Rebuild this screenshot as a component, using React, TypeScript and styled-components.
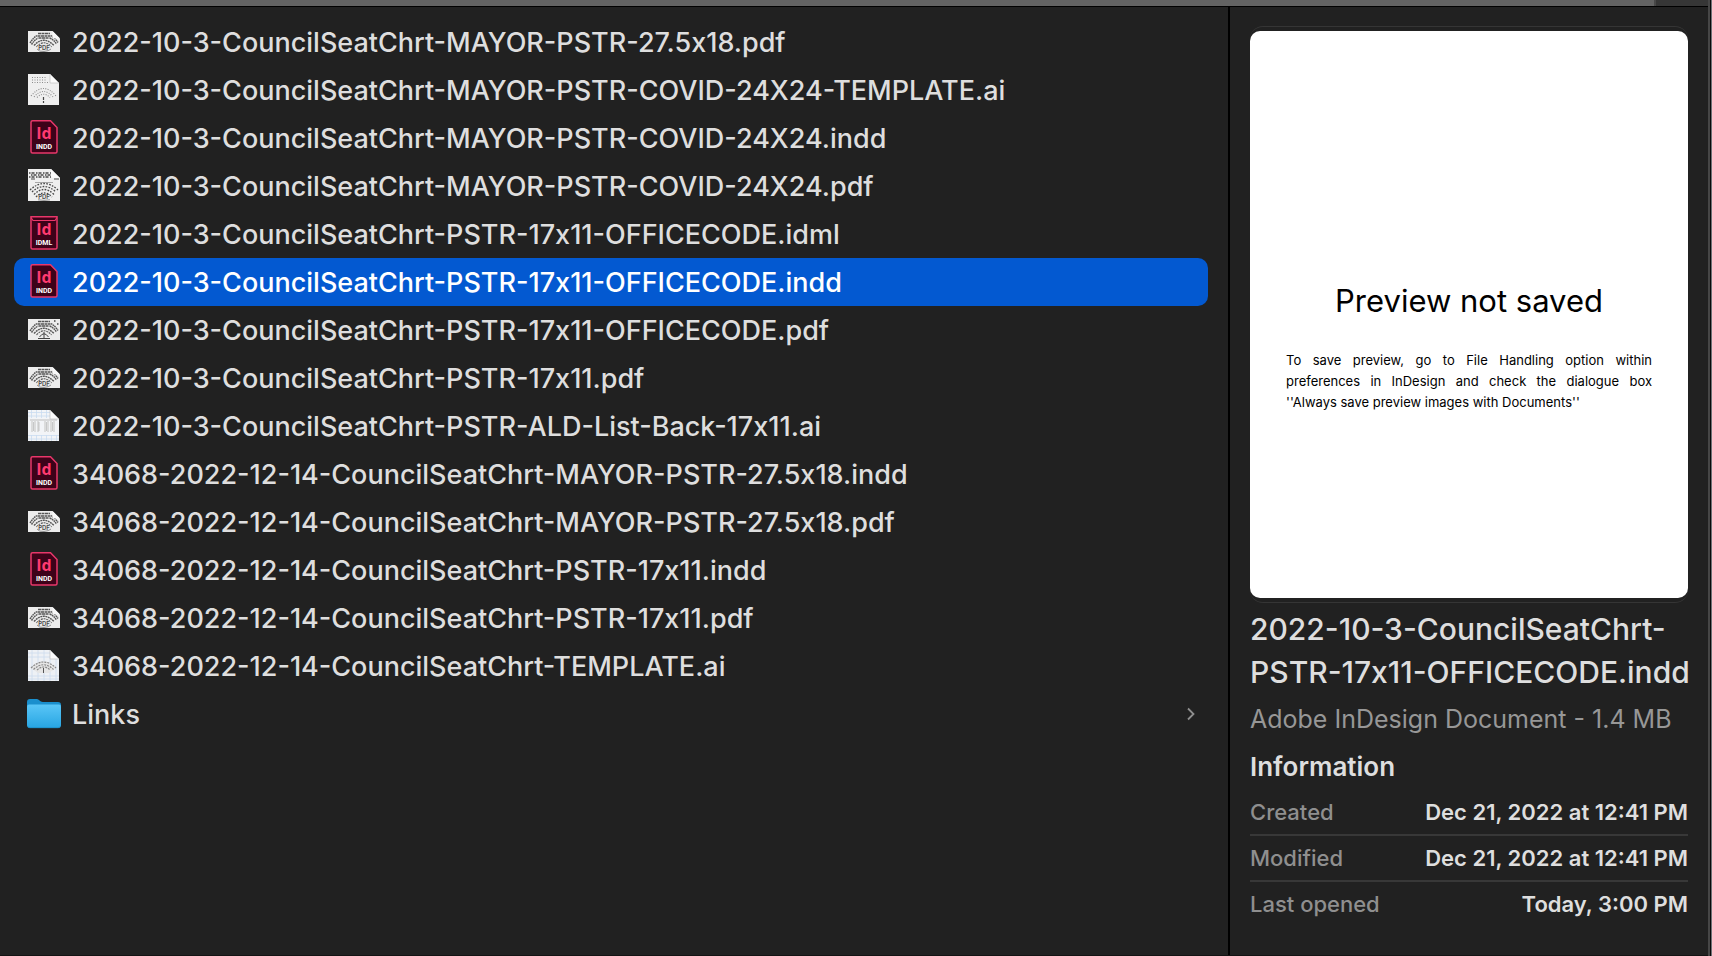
import React from "react";
import styled, { createGlobalStyle } from "styled-components";

const GlobalStyle = createGlobalStyle`
  * { box-sizing: border-box; }
  body {
    margin: 0;
    background: #212121;
    color: #dedede;
    font-family: Inter, "Liberation Sans", sans-serif;
    font-feature-settings: "calt" 0, "case" 1;
  }
`;

const Window = styled.div`
  display: flex;
  min-height: 100vh;
`;

const Main = styled.div`
  flex: 1;
  min-width: 0;
  display: flex;
  flex-direction: column;
  border-bottom: 1px solid #141414;
`;

const Edge = styled.div`
  width: 4px;
  border-left: 2px solid #464646;
  border-right: 1px solid #6f7276;
  background: #0a0a0a;
`;

const TopBar = styled.div`
  display: flex;
  height: 7px;
  background: #363636;
  border-bottom: 1px solid #000;
`;

const TopBarFill = styled.div`
  flex: 1;
  margin-right: 52px;
  background: #636363;
  border-right: 2px solid #484848;
`;

const Columns = styled.div`
  flex: 1;
  display: flex;
`;

const FilePane = styled.nav`
  flex: 1;
  min-width: 0;
  border-right: 2px solid #000;
`;

const FileList = styled.ul`
  list-style: none;
  margin: 0;
  padding: 11px 20px 0 14px;
`;

const FileRow = styled.button<{ $selected?: boolean }>`
  display: flex;
  align-items: center;
  gap: 11px;
  width: 100%;
  height: 48px;
  padding: 0 13px;
  border: 0;
  border-radius: 10px;
  background: ${(p) => (p.$selected ? "#0359d1" : "transparent")};
  color: ${(p) => (p.$selected ? "#ffffff" : "#dedede")};
  font: inherit;
  font-size: 27px;
  font-weight: 500;
  text-align: left;
  cursor: default;
`;

const FileName = styled.span`
  flex: 1;
  min-width: 0;
  white-space: nowrap;
`;

const IconSvg = styled.svg`
  flex: none;
  display: block;
  width: 34px;
  height: 36px;
`;

const Chevron = styled.svg`
  flex: none;
  width: 8px;
  height: 14px;
`;

const Details = styled.aside`
  width: 478px;
  flex: none;
  padding: 19px 20px;
`;

const Frame = styled.div`
  padding: 4px 0;
  border: solid #353535;
  border-width: 1px 0;
  border-radius: 13px;
`;

const Preview = styled.div`
  aspect-ratio: 438 / 567;
  padding: 252px 36px 0;
  border-radius: 10px;
  background: #fff;
  color: #000;
`;

const PreviewTitle = styled.p`
  margin: 0 0 31px;
  font-size: 31px;
  line-height: 36px;
  text-align: center;
`;

const PreviewText = styled.p`
  margin: 0;
  font-size: 13px;
  line-height: 21px;
  text-align: justify;
`;

const Heading = styled.h1`
  margin: 5px 0 0;
  font-size: 30px;
  font-weight: 500;
  line-height: 43px;
  white-space: nowrap;
`;

const Kind = styled.p`
  margin: 9px 0 0;
  font-size: 25px;
  line-height: 32px;
  color: #979797;
  white-space: nowrap;
`;

const SubHeading = styled.h2`
  margin: 16px 0 0;
  font-size: 26px;
  font-weight: 600;
  line-height: 32px;
`;

const InfoList = styled.dl`
  margin: 7px 0 0;
`;

const InfoRow = styled.div`
  display: flex;
  align-items: center;
  justify-content: space-between;
  height: 46px;
  border-bottom: 2px solid #383838;
  font-size: 22px;
  font-weight: 500;
  white-space: nowrap;
  &:last-child { border-bottom-color: transparent; }
`;

const InfoLabel = styled.dt`
  color: #8f8f8f;
`;

const InfoValue = styled.dd`
  margin: 0;
  font-weight: 600;
`;

type Kinds = "pdfWide" | "pdfPlain" | "pdfSquare" | "aiChart" | "aiTable" | "aiArc" | "indd" | "idml" | "folder";

const WideSeats = () => (
  <g fill="none" stroke="#555">
    <path d="M11 9.5H23M10.5 12H23.500M11.500 14H22.500" strokeWidth="1.600" strokeDasharray="3 .5" />
    <path d="M3 19Q6 14 10 11.500M4.500 20.500Q7.500 16 11 14M24 11.500Q28 14 31 18.500M23 14Q27 16 29.500 20" strokeWidth="1.400" strokeDasharray="1.700 .5" />
    <path d="M7 21.500Q16.500 11 27 21.500" strokeWidth="1.400" strokeDasharray="2 .6" />
    <path d="M9.500 23Q17 14.500 24.500 23" strokeWidth="1.100" strokeDasharray="2 .8" />
  </g>
);

const PdfLabel = ({ y }: { y: number }) => (
  <text x="17" y={y} textAnchor="middle" fontFamily="Inter, sans-serif" fontSize="6" fontWeight="600" fill="#4a4a4a">PDF</text>
);

const Fold = () => (
  <>
    <path d="M23 2H32V11Z" fill="#212121" />
    <path d="M23 2V11H32Z" fill="#fbfbfb" stroke="#b5b5b5" strokeWidth=".6" />
  </>
);

const FileIcon = ({ kind }: { kind: Kinds }) => {
  switch (kind) {
    case "pdfWide":
    case "pdfPlain":
      return (
        <IconSvg viewBox="0 0 34 36" aria-hidden="true">
          <path d={kind === "pdfWide" ? "M1 7H25.500L33 14.500V28H1Z" : "M1 7H33V28H1Z"} fill="#ececec" />
          <WideSeats />
          {kind === "pdfWide" ? (
            <>
              <path d="M25.500 7V12Q25.500 14.500 28 14.500H33Z" fill="#f8f8f8" />
              <ellipse cx="17" cy="23.500" rx="7" ry="3.500" fill="#e8e8e8" />
              <PdfLabel y={26} />
              <path d="M10 25Q12 28 17 27.500T24 25" fill="none" stroke="#777" strokeWidth=".8" />
            </>
          ) : (
            <g fill="none" stroke="#444">
              <path d="M12.500 25Q17 18.500 21.500 25M17 20V27M11 26.500H23" />
              <path d="M27 9h1.500M30 12h1.500" strokeWidth="1.500" />
            </g>
          )}
        </IconSvg>
      );
    case "pdfSquare":
      return (
        <IconSvg viewBox="0 0 34 36" aria-hidden="true">
          <path d="M1 1H24L33 10V33H1Z" fill="#efefef" />
          <g fill="none" stroke="#484848">
            <path d="M2 5H24M4 7H25M2 9H24" strokeWidth="1.500" strokeDasharray="1.500 1 3 1.500" />
            <path d="M4 11h4M27 11h5" strokeWidth="1.200" />
            <path d="M8 14.500H26" strokeWidth=".7" stroke="#888" />
            <path d="M3 22Q17 9 31 22M5 24Q17 13 29 24M7 26.500Q17 16.500 27 26.500M9 29Q17 21 25 29" strokeWidth="1.300" strokeDasharray="1.700 1.300" />
          </g>
          <path d="M24 1V8Q24 10 26 10H33Z" fill="#fbfbfb" />
          <ellipse cx="17" cy="29" rx="6" ry="3.200" fill="#ececec" />
          <PdfLabel y={31} />
          <path d="M11 31.800Q17 33 23 31.800" fill="none" stroke="#777" strokeWidth=".8" />
        </IconSvg>
      );
    case "aiChart":
      return (
        <IconSvg viewBox="0 0 34 36" aria-hidden="true">
          <path d="M1 2H23L32 11V33H1Z" fill="#efefef" />
          <Fold />
          <g fill="none" stroke="#8c8c8c">
            <path d="M5 5.500H20M5 8H20M5 10.500H22" strokeWidth="1" strokeDasharray="1 1.500" />
            <path d="M4 24Q16.500 9 29 24M7 25Q16.500 14 26 25M10 25.500Q16.500 19 23 25.500" strokeWidth="1.100" strokeDasharray="1 1.400" />
            <path d="M16.500 25V28M16.500 29V31" stroke="#444" strokeWidth="1.200" />
          </g>
        </IconSvg>
      );
    case "aiTable":
      return (
        <IconSvg viewBox="0 0 34 36" aria-hidden="true">
          <path d="M1 2H23L32 11V33H1Z" fill="#f2f4f7" />
          <path d="M1 4.500H23M1 8H23M1 27.500H32M1 31H32M4.500 2V10M9.500 2V10M14.500 2V10M19.500 2V10M4.500 27V33M9.500 27V33M14.500 27V33M19.500 27V33M24.500 27V33M29.500 27V33" stroke="#c9dcf0" fill="none" strokeWidth=".8" />
          <path d="M3 12H30" stroke="#bdbdbd" fill="none" />
          <path d="M5 13V24M8 13V24M11 13V24M18 13V24M21 13V24M24 13V24M27 13V24" stroke="#d4d4d4" strokeWidth="1.500" fill="none" />
          <path d="M6.500 14V23M12 14V23M19.500 14V23M25.500 14V23" stroke="#a8a8a8" strokeWidth=".6" fill="none" />
          <Fold />
        </IconSvg>
      );
    case "aiArc":
      return (
        <IconSvg viewBox="0 0 34 36" aria-hidden="true">
          <path d="M1 2H23L32 11V33H1Z" fill="#eef1f5" />
          <path d="M1 5H23M1 9H23M1 28H32M1 31H32M5 2V33M11 2V33M17 2V33M23 11V33M29 11V33" stroke="#ccdced" fill="none" strokeWidth=".8" />
          <path d="M4 20Q9 13 16.500 13.500T29 20L22 25H11Z" fill="#e6e6e6" />
          <g fill="none" stroke="#878787">
            <path d="M4 20Q16.500 8 29 20M6.500 21.500Q16.500 12 26.500 21.500M10 22Q16.500 16 23 22" strokeWidth="1.200" strokeDasharray="2 1" />
            <path d="M16.500 20V25" stroke="#555" />
          </g>
          <Fold />
        </IconSvg>
      );
    case "indd":
    case "idml":
      return (
        <IconSvg viewBox="0 0 34 36" aria-hidden="true">
          <path
            d={kind === "indd"
              ? "M5.500 .8H23.500L30 7.500V31.500Q30 33 28.500 33H5.500Q4 33 4 31.500V2.300Q4 .8 5.500 .8Z"
              : "M4 .8H30V31.500Q30 33 28.500 33H5.500Q4 33 4 31.500Z"}
            fill="#3d0219" stroke="#e8376a" strokeWidth="1.500" />
          {kind === "idml" && <path d="M4 1.500L6 4.500H28L30 1.500" fill="none" stroke="#e8376a" strokeWidth="1.200" />}
          <text x="17" y="18.700" textAnchor="middle" fontFamily='"Open Sans", sans-serif' fontSize="16" fontWeight="700" fill="#ff3a70">Id</text>
          <text x="17" y="28.800" textAnchor="middle" fontFamily="Roboto, sans-serif" fontSize="7" fontWeight="700" fill="#fff">
            {kind.toUpperCase()}
          </text>
        </IconSvg>
      );
    default:
      return (
        <IconSvg viewBox="0 0 34 36" aria-hidden="true">
          <defs>
            <linearGradient id="folderFront" x1="0" y1="0" x2="0" y2="1">
              <stop offset="0" stopColor="#5ac6f7" />
              <stop offset="1" stopColor="#27a5e2" />
            </linearGradient>
          </defs>
          <path d="M0 6Q0 3 3 3H9.500Q11 3 12 4L13.500 5.200Q14.500 6 16 6H31Q34 6 34 9V20H0Z" fill="#1a8fcd" />
          <path d="M0 10.500Q0 8.500 2 8.500H32Q34 8.500 34 10.500V29Q34 32 31 32H3Q0 32 0 29Z" fill="url(#folderFront)" />
          <path d="M1 31Q2 31.700 3 31.700H31Q32 31.700 33 31" fill="none" stroke="#1c8bc4" strokeWidth=".8" />
        </IconSvg>
      );
  }
};

const files: { name: string; kind: Kinds; selected?: boolean }[] = [
  { name: "2022-10-3-CouncilSeatChrt-MAYOR-PSTR-27.5x18.pdf", kind: "pdfWide" },
  { name: "2022-10-3-CouncilSeatChrt-MAYOR-PSTR-COVID-24X24-TEMPLATE.ai", kind: "aiChart" },
  { name: "2022-10-3-CouncilSeatChrt-MAYOR-PSTR-COVID-24X24.indd", kind: "indd" },
  { name: "2022-10-3-CouncilSeatChrt-MAYOR-PSTR-COVID-24X24.pdf", kind: "pdfSquare" },
  { name: "2022-10-3-CouncilSeatChrt-PSTR-17x11-OFFICECODE.idml", kind: "idml" },
  { name: "2022-10-3-CouncilSeatChrt-PSTR-17x11-OFFICECODE.indd", kind: "indd", selected: true },
  { name: "2022-10-3-CouncilSeatChrt-PSTR-17x11-OFFICECODE.pdf", kind: "pdfPlain" },
  { name: "2022-10-3-CouncilSeatChrt-PSTR-17x11.pdf", kind: "pdfWide" },
  { name: "2022-10-3-CouncilSeatChrt-PSTR-ALD-List-Back-17x11.ai", kind: "aiTable" },
  { name: "34068-2022-12-14-CouncilSeatChrt-MAYOR-PSTR-27.5x18.indd", kind: "indd" },
  { name: "34068-2022-12-14-CouncilSeatChrt-MAYOR-PSTR-27.5x18.pdf", kind: "pdfWide" },
  { name: "34068-2022-12-14-CouncilSeatChrt-PSTR-17x11.indd", kind: "indd" },
  { name: "34068-2022-12-14-CouncilSeatChrt-PSTR-17x11.pdf", kind: "pdfWide" },
  { name: "34068-2022-12-14-CouncilSeatChrt-TEMPLATE.ai", kind: "aiArc" },
  { name: "Links", kind: "folder" },
];

const info = [
  ["Created", "Dec 21, 2022 at 12:41 PM"],
  ["Modified", "Dec 21, 2022 at 12:41 PM"],
  ["Last opened", "Today, 3:00 PM"],
];

export default function App() {
  return (
    <>
      <GlobalStyle />
      <Window>
        <Main>
          <TopBar><TopBarFill /></TopBar>
          <Columns>
            <FilePane aria-label="Files">
              <FileList>
                {files.map((f) => (
                  <li key={f.name}>
                    <FileRow type="button" $selected={f.selected} aria-current={f.selected}>
                      <FileIcon kind={f.kind} />
                      <FileName>{f.name}</FileName>
                      {f.kind === "folder" && (
                        <Chevron viewBox="0 0 8 14" aria-hidden="true">
                          <path d="M1 1.500L6.500 7L1 12.500" fill="none" stroke="#8f8f8f" strokeWidth="1.800" />
                        </Chevron>
                      )}
                    </FileRow>
                  </li>
                ))}
              </FileList>
            </FilePane>
            <Details>
              <Frame>
                <Preview>
                  <PreviewTitle>Preview not saved</PreviewTitle>
                  <PreviewText>
                    To save preview, go to File Handling option within preferences in InDesign and check the
                    dialogue box ''Always save preview images with Documents''
                  </PreviewText>
                </Preview>
              </Frame>
              <Heading>2022-10-3-CouncilSeatChrt-<br />PSTR-17x11-OFFICECODE.indd</Heading>
              <Kind>Adobe InDesign Document - 1.4 MB</Kind>
              <SubHeading>Information</SubHeading>
              <InfoList>
                {info.map(([label, value]) => (
                  <InfoRow key={label}>
                    <InfoLabel>{label}</InfoLabel>
                    <InfoValue>{value}</InfoValue>
                  </InfoRow>
                ))}
              </InfoList>
            </Details>
          </Columns>
        </Main>
        <Edge />
      </Window>
    </>
  );
}
